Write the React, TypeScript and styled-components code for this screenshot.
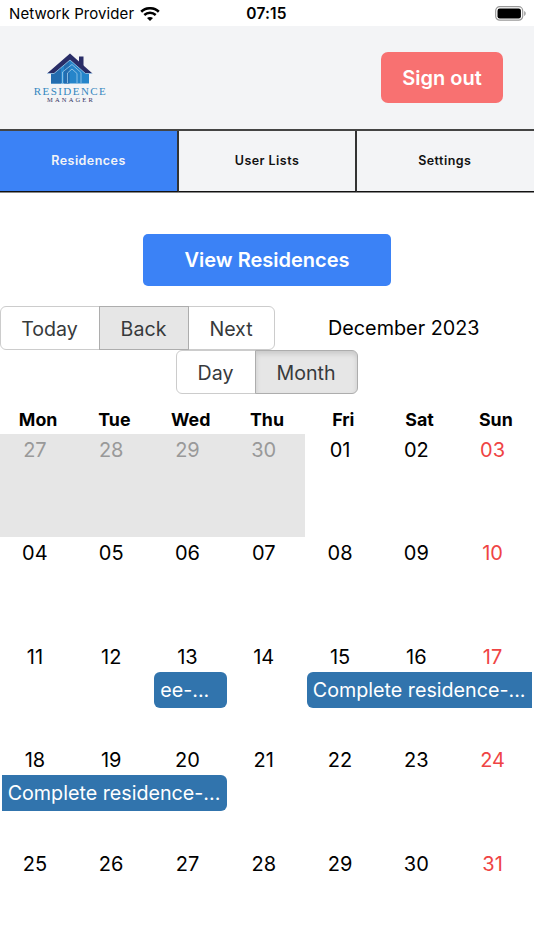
import React from "react";
import styled, { createGlobalStyle, css } from "styled-components";

const Global = createGlobalStyle`
  *, *::before, *::after { box-sizing: border-box; }
  body { margin: 0; background: #fff; color: #000; font-family: Inter, sans-serif; }
  button { font: inherit; cursor: pointer; }
`;

const Screen = styled.div`
  width: 534px;
  height: 950px;
  overflow: hidden;
  background: #fff;
`;

const StatusBar = styled.div`
  height: 26px;
  display: grid;
  grid-template-columns: 1fr auto 1fr;
  align-items: center;
  padding: 2px 8px 0 9px;
  font-size: 15.5px;
`;

const Carrier = styled.div`
  display: flex;
  align-items: center;
  gap: 6px;
  line-height: 20px;
  font-size: 15px;
  letter-spacing: 0.08px;
`;

const Clock = styled.div`
  font-weight: 600;
  line-height: 20px;
  letter-spacing: 0.15px;
  margin-left: -2px;
`;

const Battery = styled.svg`
  justify-self: end;
`;

const Header = styled.header`
  height: 103px;
  display: flex;
  justify-content: space-between;
  align-items: center;
  padding: 0 31px 0 34px;
  background: #f3f4f6;
`;

const Brand = styled.div`
  width: 72px;
  display: flex;
  flex-direction: column;
  align-items: center;
  font-family: "Liberation Serif", serif;
  white-space: nowrap;
`;

const BrandName = styled.div`
  margin-top: 2px;
  font-size: 11px;
  line-height: 10px;
  letter-spacing: 1.45px;
  margin-right: -1px;
  color: #3387c0;
`;

const BrandSub = styled.div`
  margin-top: 0;
  font-size: 6.5px;
  line-height: 7px;
  letter-spacing: 2.15px;
  margin-right: -2px;
  color: #34325f;
`;

const PrimaryButton = styled.button<{ $tone: "red" | "blue" }>`
  height: 51.5px;
  width: ${(p) => (p.$tone === "red" ? 122 : 248)}px;
  padding: 0;
  border: 0;
  border-radius: ${(p) => (p.$tone === "red" ? 7 : 5)}px;
  background: ${(p) => (p.$tone === "red" ? "#f87171" : "#3b82f6")};
  color: #fff;
  font-size: 20px;
  font-weight: 600;
`;

const Tabs = styled.nav`
  height: 64px;
  display: grid;
  grid-template-columns: 179px 178px 177px;
  border-top: 2px solid #444;
  border-bottom: 1px solid #888;
`;

const Tab = styled.button<{ $active?: boolean }>`
  padding: 0 0 1.5px;
  border: 0;
  border-right: 2px solid #333;
  border-bottom: 1px solid #111;
  background: ${(p) => (p.$active ? "#3b82f6" : "#f3f4f6")};
  color: ${(p) => (p.$active ? "#f3f4f6" : "#111")};
  font-size: 12.5px;
  font-weight: 600;
  letter-spacing: 0.45px;
  &:last-child { border-right: 0; padding-right: 1.5px; }
`;

const Action = styled.div`
  display: flex;
  justify-content: center;
  padding: 41px 0 20.5px;
`;

const Toolbar = styled.div`
  display: grid;
  grid-template-columns: 275px 1fr;
  align-items: center;
`;

const ButtonGroup = styled.div<{ $centered?: boolean }>`
  display: flex;
  ${(p) => p.$centered && css`
    grid-column: 1 / -1;
    justify-self: center;
  `}
`;

const GroupButton = styled.button<{ $width: number; $state?: "hover" | "active" }>`
  width: ${(p) => p.$width}px;
  height: 44px;
  padding: 1px 1px 0 0;
  border: 1px solid #ccc;
  background: #fff;
  color: #373a3c;
  font-size: 19.6px;
  & + & { margin-left: -1px; }
  &:first-child { border-radius: 6px 0 0 6px; }
  &:last-child { border-radius: 0 6px 6px 0; }
  ${(p) => p.$state && css`
    position: relative;
    background: #e6e6e6;
    border-color: #adadad;
  `}
  ${(p) => p.$state === "active" && css`
    box-shadow: inset 0 3px 5px rgba(0, 0, 0, 0.125);
  `}
`;

const PeriodLabel = styled.div`
  text-align: center;
  font-size: 19.8px;
  padding: 0 1.5px 0 0;
`;

const WeekHeader = styled.div`
  height: 40px;
  display: grid;
  grid-template-columns: repeat(7, 1fr);
  align-items: end;
  padding-bottom: 3px;
  font-size: 17.8px;
  font-weight: 700;
  line-height: 22px;
  text-align: center;
`;

const Week = styled.div`
  height: 103.4px;
  display: grid;
  grid-template-columns: repeat(7, 1fr);
  grid-template-rows: 31px 36px 1fr;
`;

const Day = styled.div<{ $outside?: boolean; $sunday?: boolean }>`
  grid-row: 1 / -1;
  padding: 4px 6.5px 0 0;
  text-align: center;
  font-size: 20px;
  line-height: 25px;
  background: ${(p) => (p.$outside ? "#e6e6e6" : "transparent")};
  color: ${(p) => (p.$outside ? "#999" : p.$sunday ? "#ef4444" : "#000")};
`;

const Event = styled.div<{ $start: number; $span: number; $before?: boolean; $after?: boolean }>`
  grid-row: 2;
  grid-column: ${(p) => p.$start} / span ${(p) => p.$span};
  margin: 0 1.5px;
  padding: 0 0 0 6.2px;
  overflow: hidden;
  white-space: nowrap;
  border-radius: ${(p) =>
    `${p.$before ? 0 : 6}px ${p.$after ? 0 : 6}px ${p.$after ? 0 : 6}px ${p.$before ? 0 : 6}px`};
  background: #3174ad;
  color: #fff;
  font-size: 19.7px;
  line-height: 37px;
`;

interface CalendarEvent {
  title: string;
  start: number;
  span: number;
  before?: boolean;
  after?: boolean;
}

const weekdays = ["Mon", "Tue", "Wed", "Thu", "Fri", "Sat", "Sun"];

const weeks: { days: string[]; outside?: number; events?: CalendarEvent[] }[] = [
  { days: ["27", "28", "29", "30", "01", "02", "03"], outside: 4 },
  { days: ["04", "05", "06", "07", "08", "09", "10"] },
  {
    days: ["11", "12", "13", "14", "15", "16", "17"],
    events: [
      { title: "ee-...", start: 3, span: 1 },
      { title: "Complete residence-...", start: 5, span: 3, after: true },
    ],
  },
  {
    days: ["18", "19", "20", "21", "22", "23", "24"],
    events: [{ title: "Complete residence-...", start: 1, span: 3, before: true }],
  },
  { days: ["25", "26", "27", "28", "29", "30", "31"] },
];

function WifiIcon() {
  return (
    <svg width="20" height="15" viewBox="0 0 20 15" fill="none" stroke="#000">
      <path d="M1.2 4.8C6.1.1 13.9.1 18.8 4.8" strokeWidth="2.6" />
      <path d="M4.3 8C7.5 5 12.5 5 15.7 8" strokeWidth="2.4" />
      <path d="M10 14 7 11C8.7 9.5 11.3 9.5 13 11Z" fill="#000" stroke="none" />
    </svg>
  );
}

function BatteryIcon() {
  return (
    <Battery width="31" height="16" viewBox="0 0 31 16">
      <rect x=".7" y=".7" width="27" height="13.5" rx="4" fill="none" stroke="#999" strokeWidth="1.2" />
      <rect x="2.5" y="2.5" width="23.4" height="9.9" rx="2.2" />
      <path d="M29.2 5.1c2 1 2 3.8 0 4.8Z" fill="#999" />
    </Battery>
  );
}

function HouseLogo() {
  return (
    <svg width="48" height="31" viewBox="0 0 48 31">
      <path d="M5 19 24 4 43 19V30.5H5Z" fill="#2585ca" />
      <path d="M5 20 15 12V30.5H5ZM18 12l5.5-5v23.5H18Z" fill="#236caf" />
      <path d="M33 3.5h4.5v13L33 13Z" fill="#292d67" />
      <path d="M1 20.5 24 .5 46.5 20.5H39.5L24 7 8 20.5Z" fill="#292d67" />
      <path d="M1 20.5H8L24 7 39.5 20.5H46M16.5 30V19L26 11.5l9 8V30M21.5 30V20l4.5-4 5 4.5V30" fill="none" stroke="#9fcceb" strokeWidth=".8" />
    </svg>
  );
}

export default function App() {
  return (
    <Screen>
      <Global />
      <StatusBar>
        <Carrier>Network Provider<WifiIcon /></Carrier>
        <Clock>07:15</Clock>
        <BatteryIcon />
      </StatusBar>
      <Header>
        <Brand>
          <HouseLogo />
          <BrandName>RESIDENCE</BrandName>
          <BrandSub>MANAGER</BrandSub>
        </Brand>
        <PrimaryButton $tone="red">Sign out</PrimaryButton>
      </Header>
      <Tabs>
        <Tab $active>Residences</Tab>
        <Tab>User Lists</Tab>
        <Tab>Settings</Tab>
      </Tabs>
      <Action>
        <PrimaryButton $tone="blue">View Residences</PrimaryButton>
      </Action>
      <Toolbar>
        <ButtonGroup>
          <GroupButton $width={100}>Today</GroupButton>
          <GroupButton $width={90} $state="hover">Back</GroupButton>
          <GroupButton $width={87}>Next</GroupButton>
        </ButtonGroup>
        <PeriodLabel>December 2023</PeriodLabel>
        <ButtonGroup $centered>
          <GroupButton $width={80}>Day</GroupButton>
          <GroupButton $width={103} $state="active">Month</GroupButton>
        </ButtonGroup>
      </Toolbar>
      <WeekHeader>
        {weekdays.map((d) => <div key={d}>{d}</div>)}
      </WeekHeader>
      {weeks.map((week, w) => (
        <Week key={w}>
          {week.days.map((day, i) => (
            <Day
              key={day}
              style={{ gridColumn: i + 1 }}
              $outside={i < (week.outside ?? 0)}
              $sunday={i === 6}
            >
              {day}
            </Day>
          ))}
          {week.events?.map((e) => (
            <Event key={e.start} $start={e.start} $span={e.span} $before={e.before} $after={e.after}>
              {e.title}
            </Event>
          ))}
        </Week>
      ))}
    </Screen>
  );
}
